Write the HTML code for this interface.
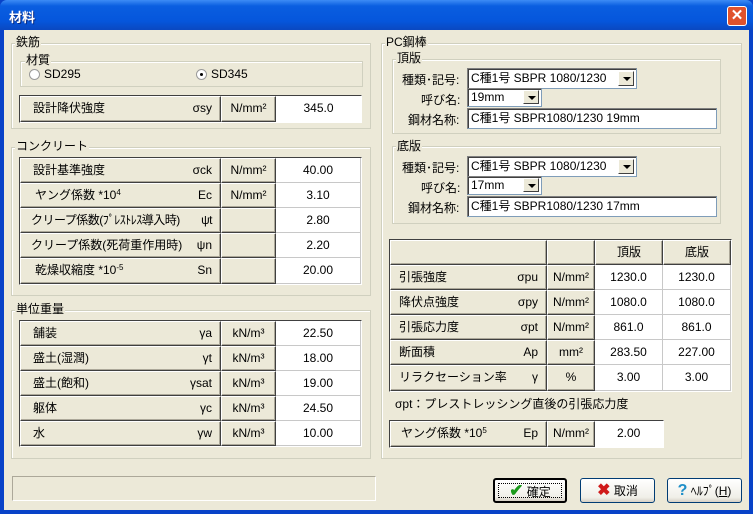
<!DOCTYPE html>
<html><head><meta charset="utf-8"><style>
*{margin:0;padding:0;box-sizing:border-box}
body{width:753px;height:514px;overflow:hidden;background:#0842c8;font-family:"Liberation Sans","Noto Sans CJK JP",sans-serif;font-size:12px;color:#000;position:relative}
.a{position:absolute}
#title{left:0;top:0;width:753px;height:30px;background:linear-gradient(#3d8cf5,#0a5ee0 20%,#0556dc 70%,#0a48c0);border-radius:7px 7px 0 0}
#body{left:4px;top:30px;width:745px;height:480px;background:#ece9d8}
.grp{position:absolute;border:1px solid #d0d0bf;box-shadow:1px 1px 0 #fff inset}
.lab{position:absolute;background:#ece9d8;padding:0 1px;line-height:13px}
.tb{position:absolute;border-top:1px solid #404040;border-left:1px solid #404040;border-right:1px solid #fff;border-bottom:1px solid #fff;background:#fff}
.g{position:absolute;background:#ece9d8;border-top:1px solid #fff;border-left:1px solid #fff;border-right:1px solid #404040;border-bottom:1px solid #404040;box-shadow:inset -1px -1px 0 #aca899;line-height:23px;white-space:nowrap}
.w{position:absolute;background:#fff;border-right:1px solid #c8c8c8;border-bottom:1px solid #c8c8c8;line-height:24px;text-align:center}
.s{position:absolute;right:8px;top:0}
.u{text-align:center}
.in{position:absolute;background:#fff;border:1px solid;border-color:#7f9db9;border-top-color:#808080;border-left-color:#808080;box-shadow:inset 1px 1px 0 #404040;line-height:18px;padding-left:3px;white-space:nowrap}
.dd{position:absolute;right:2px;top:2px;width:16px;height:15px;background:#ece9d8;border:1px solid;border-color:#fff #404040 #404040 #fff}
.dd:after{content:"";position:absolute;left:4px;top:5px;border-left:4px solid transparent;border-right:4px solid transparent;border-top:4px solid #000}
.btn{position:absolute;top:478px;height:25px;border:1px solid #003c74;border-radius:3px;background:linear-gradient(#fff,#f0efe8 80%,#d6d0c5);text-align:center;line-height:23px;font-size:12px}
sup{font-size:8px;vertical-align:4px;line-height:0}
</style></head><body>
<div class="a" id="title"></div>
<div class="a" style="left:9px;top:7px;color:#fff;font-weight:bold;font-size:13px;text-shadow:1px 1px #0a2a80">材料</div>
<div class="a" style="left:727px;top:6px;width:20px;height:20px;background:#e0522c;border:1px solid #fff;border-radius:3px;color:#fff;font-weight:bold;font-size:15px;text-align:center;line-height:18px">✕</div>
<div class="a" id="body"></div>

<!-- 鉄筋 -->
<div class="grp" style="left:11px;top:43px;width:360px;height:86px"></div>
<div class="lab" style="left:15px;top:36px">鉄筋</div>
<div class="grp" style="left:20px;top:61px;width:343px;height:26px"></div>
<div class="lab" style="left:25px;top:54px">材質</div>
<div class="a" style="left:29px;top:69px;width:11px;height:11px;border-radius:50%;background:#fff;border:1px solid #9a9a9a"></div>
<div class="a" style="left:44px;top:67px">SD295</div>
<div class="a" style="left:196px;top:69px;width:11px;height:11px;border-radius:50%;background:#fff;border:1px solid #9a9a9a"><div class="a" style="left:3px;top:3px;width:3px;height:3px;background:#000;border-radius:50%"></div></div>
<div class="a" style="left:211px;top:67px">SD345</div>
<div class="tb" style="left:19px;top:95px;width:343px;height:28px"></div>
<div class="g" style="left:20px;top:96px;width:201px;height:26px;padding-left:12px">設計降伏強度<span class="s">σsy</span></div>
<div class="g u" style="left:221px;top:96px;width:55px;height:26px">N/mm²</div>
<div class="w" style="left:276px;top:96px;width:85px;height:26px;border:none">345.0</div>

<!-- コンクリート -->
<div class="grp" style="left:11px;top:147px;width:360px;height:149px"></div>
<div class="lab" style="left:15px;top:140px">コンクリート</div>
<div class="tb" style="left:19px;top:157px;width:343px;height:128px"></div>
<div class="g" style="left:20px;top:158px;width:201px;height:25px;padding-left:12px">設計基準強度<span class="s">σck</span></div>
<div class="g u" style="left:221px;top:158px;width:55px;height:25px">N/mm²</div>
<div class="w" style="left:276px;top:158px;width:85px;height:25px">40.00</div>
<div class="g" style="left:20px;top:183px;width:201px;height:25px;padding-left:14px">ヤング係数 *10<sup>4</sup><span class="s">Ec</span></div>
<div class="g u" style="left:221px;top:183px;width:55px;height:25px">N/mm²</div>
<div class="w" style="left:276px;top:183px;width:85px;height:25px">3.10</div>
<div class="g" style="left:20px;top:208px;width:201px;height:25px;padding-left:10px;letter-spacing:-0.5px">クリープ係数(ﾌﾟﾚｽﾄﾚｽ導入時)<span class="s">ψt</span></div>
<div class="g u" style="left:221px;top:208px;width:55px;height:25px"></div>
<div class="w" style="left:276px;top:208px;width:85px;height:25px">2.80</div>
<div class="g" style="left:20px;top:233px;width:201px;height:25px;padding-left:10px">クリープ係数(死荷重作用時)<span class="s">ψn</span></div>
<div class="g u" style="left:221px;top:233px;width:55px;height:25px"></div>
<div class="w" style="left:276px;top:233px;width:85px;height:25px">2.20</div>
<div class="g" style="left:20px;top:258px;width:201px;height:26px;padding-left:14px">乾燥収縮度 *10<sup>-5</sup><span class="s">Sn</span></div>
<div class="g u" style="left:221px;top:258px;width:55px;height:26px"></div>
<div class="w" style="left:276px;top:258px;width:85px;height:26px">20.00</div>

<!-- 単位重量 -->
<div class="grp" style="left:11px;top:310px;width:360px;height:149px"></div>
<div class="lab" style="left:15px;top:303px">単位重量</div>
<div class="tb" style="left:19px;top:320px;width:343px;height:127px"></div>
<div class="g" style="left:20px;top:321px;width:201px;height:25px;padding-left:12px">舗装<span class="s">γa</span></div>
<div class="g u" style="left:221px;top:321px;width:55px;height:25px">kN/m³</div>
<div class="w" style="left:276px;top:321px;width:85px;height:25px">22.50</div>
<div class="g" style="left:20px;top:346px;width:201px;height:25px;padding-left:12px">盛土(湿潤)<span class="s">γt</span></div>
<div class="g u" style="left:221px;top:346px;width:55px;height:25px">kN/m³</div>
<div class="w" style="left:276px;top:346px;width:85px;height:25px">18.00</div>
<div class="g" style="left:20px;top:371px;width:201px;height:25px;padding-left:12px">盛土(飽和)<span class="s">γsat</span></div>
<div class="g u" style="left:221px;top:371px;width:55px;height:25px">kN/m³</div>
<div class="w" style="left:276px;top:371px;width:85px;height:25px">19.00</div>
<div class="g" style="left:20px;top:396px;width:201px;height:25px;padding-left:12px">躯体<span class="s">γc</span></div>
<div class="g u" style="left:221px;top:396px;width:55px;height:25px">kN/m³</div>
<div class="w" style="left:276px;top:396px;width:85px;height:25px">24.50</div>
<div class="g" style="left:20px;top:421px;width:201px;height:25px;padding-left:12px">水<span class="s">γw</span></div>
<div class="g u" style="left:221px;top:421px;width:55px;height:25px">kN/m³</div>
<div class="w" style="left:276px;top:421px;width:85px;height:25px">10.00</div>

<div class="a" style="left:12px;top:476px;width:364px;height:25px;border:1px solid;border-color:#aca899 #fff #fff #aca899"></div>

<!-- PC鋼棒 -->
<div class="grp" style="left:381px;top:43px;width:361px;height:416px"></div>
<div class="lab" style="left:385px;top:36px">PC鋼棒</div>
<div class="grp" style="left:392px;top:59px;width:329px;height:75px"></div>
<div class="lab" style="left:396px;top:52px">頂版</div>
<div class="a" style="left:402px;top:71px">種類･記号:</div>
<div class="in" style="left:467px;top:68px;width:170px;height:21px">C種1号 SBPR 1080/1230<div class="dd"></div></div>
<div class="a" style="left:421px;top:91px">呼び名:</div>
<div class="in" style="left:467px;top:88px;width:75px;height:19px;line-height:16px">19mm<div class="dd" style="top:1px;height:14px"></div></div>
<div class="a" style="left:408px;top:111px">鋼材名称:</div>
<div class="in" style="left:467px;top:108px;width:250px;height:21px">C種1号 SBPR1080/1230 19mm</div>

<div class="grp" style="left:392px;top:146px;width:329px;height:78px"></div>
<div class="lab" style="left:396px;top:140px">底版</div>
<div class="a" style="left:402px;top:159px">種類･記号:</div>
<div class="in" style="left:467px;top:156px;width:170px;height:21px">C種1号 SBPR 1080/1230<div class="dd"></div></div>
<div class="a" style="left:421px;top:179px">呼び名:</div>
<div class="in" style="left:467px;top:176px;width:75px;height:19px;line-height:16px">17mm<div class="dd" style="top:1px;height:14px"></div></div>
<div class="a" style="left:408px;top:199px">鋼材名称:</div>
<div class="in" style="left:467px;top:196px;width:250px;height:21px">C種1号 SBPR1080/1230 17mm</div>

<div class="tb" style="left:389px;top:239px;width:343px;height:153px"></div>
<div class="g" style="left:390px;top:240px;width:157px;height:25px"></div>
<div class="g" style="left:547px;top:240px;width:48px;height:25px"></div>
<div class="g u" style="left:595px;top:240px;width:68px;height:25px">頂版</div>
<div class="g u" style="left:663px;top:240px;width:68px;height:25px">底版</div>

<div class="g" style="left:390px;top:265px;width:157px;height:25px;padding-left:8px">引張強度<span class="s">σpu</span></div>
<div class="g u" style="left:547px;top:265px;width:48px;height:25px">N/mm²</div>
<div class="w" style="left:595px;top:265px;width:68px;height:25px">1230.0</div>
<div class="w" style="left:663px;top:265px;width:68px;height:25px">1230.0</div>
<div class="g" style="left:390px;top:290px;width:157px;height:25px;padding-left:8px">降伏点強度<span class="s">σpy</span></div>
<div class="g u" style="left:547px;top:290px;width:48px;height:25px">N/mm²</div>
<div class="w" style="left:595px;top:290px;width:68px;height:25px">1080.0</div>
<div class="w" style="left:663px;top:290px;width:68px;height:25px">1080.0</div>
<div class="g" style="left:390px;top:315px;width:157px;height:25px;padding-left:8px">引張応力度<span class="s">σpt</span></div>
<div class="g u" style="left:547px;top:315px;width:48px;height:25px">N/mm²</div>
<div class="w" style="left:595px;top:315px;width:68px;height:25px">861.0</div>
<div class="w" style="left:663px;top:315px;width:68px;height:25px">861.0</div>
<div class="g" style="left:390px;top:340px;width:157px;height:25px;padding-left:8px">断面積<span class="s">Ap</span></div>
<div class="g u" style="left:547px;top:340px;width:48px;height:25px">mm²</div>
<div class="w" style="left:595px;top:340px;width:68px;height:25px">283.50</div>
<div class="w" style="left:663px;top:340px;width:68px;height:25px">227.00</div>
<div class="g" style="left:390px;top:365px;width:157px;height:26px;padding-left:8px">リラクセーション率<span class="s">γ</span></div>
<div class="g u" style="left:547px;top:365px;width:48px;height:26px">%</div>
<div class="w" style="left:595px;top:365px;width:68px;height:26px">3.00</div>
<div class="w" style="left:663px;top:365px;width:68px;height:26px">3.00</div>

<div class="a" style="left:395px;top:395px">σpt：プレストレッシング直後の引張応力度</div>

<div class="tb" style="left:389px;top:420px;width:275px;height:28px"></div>
<div class="g" style="left:390px;top:421px;width:157px;height:26px;padding-left:10px">ヤング係数 *10<sup>5</sup><span class="s">Ep</span></div>
<div class="g u" style="left:547px;top:421px;width:48px;height:26px">N/mm²</div>
<div class="w" style="left:595px;top:421px;width:68px;height:26px;border:none;text-align:left;padding-left:22px">2.00</div>

<!-- buttons -->
<div class="btn" style="left:493px;width:74px;border:2px solid #000;line-height:21px"><div class="a" style="left:3px;top:3px;right:3px;bottom:3px;border:1px dotted #000"></div><span style="color:#1a9a1a;font-size:17px;font-weight:bold">✔</span> 確定</div>
<div class="btn" style="left:580px;width:75px"><span style="color:#d01a1a;font-size:16px;font-weight:bold">✖</span> 取消</div>
<div class="btn" style="left:667px;width:75px"><span style="color:#1f8fc8;font-size:16px;font-weight:bold">?</span> ﾍﾙﾌﾟ(<u>H</u>)</div>
</body></html>
